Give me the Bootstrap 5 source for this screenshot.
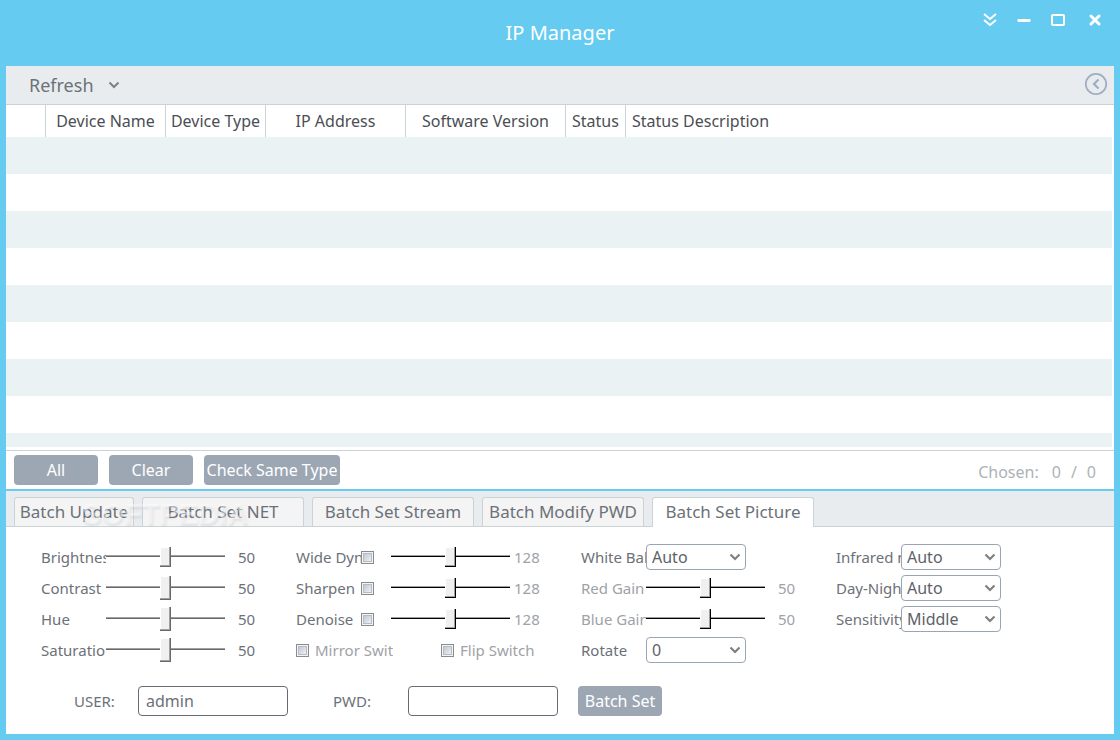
<!DOCTYPE html>
<html lang="en">
<head>
<meta charset="utf-8">
<meta name="viewport" content="width=device-width, initial-scale=1">
<title>IP Manager</title>
<link href="https://cdn.jsdelivr.net/npm/bootstrap@5.3.0/dist/css/bootstrap.min.css" rel="stylesheet">
<style>
  :root { --sky: #66cbf1; --bar: #e8ecef; --line: #cad3d5; --slate: #9da7b4; --ink: #6c7178; --muted: #9fa2a6; }
  body { font-family: "Noto Sans", "Open Sans", sans-serif; font-size: 15px; line-height: 20px; color: var(--ink); background: var(--sky); }
  .app-window { padding: 0 6px 6px; }
  .title-bar { display: grid; grid-template-columns: 1fr auto 1fr; height: 66px; color: #fff; }
  .title-bar h1 { font-size: 20px; line-height: 24px; font-weight: 400; }
  .win-btn { width: 34px; height: 40px; padding: 0; border: 0; background: none; color: #fff; display: grid; place-items: center; }
  .win-btn.close-win { width: 39px; }
  .tool-bar { background: var(--bar); border-bottom: 1px solid var(--line); height: 39px; padding: 0 6px 2px 23px; }
  .refresh-btn { font-size: 18px; line-height: 24px; color: var(--ink); gap: 14px; padding-top: 2px; }
  .plain-btn { border: 0; background: none; color: inherit; }
  .grid-area { flex: 1 1 0; min-height: 120px; margin-right: 2px; margin-bottom: 3px; }
  .device-table { table-layout: fixed; width: 100%; border-collapse: separate; border-spacing: 0; }
  .device-table th { height: 32px; padding: 0; font-size: 16px; font-weight: 400; color: #4b4e53; text-align: center; border-right: 1px solid var(--line); white-space: nowrap; }
  .device-table th:last-child { border: 0; text-align: left; padding-left: 6px; }
  .device-table td { height: 37px; padding: 0; }
  .device-table tbody tr:nth-child(odd) { background: #eaf2f4; }
  .action-bar { border-top: 1px solid var(--line); border-bottom: 2px solid var(--sky); height: 41px; padding: 0 18px 0 8px; gap: 11px; }
  .slate-btn { width: 84px; height: 30px; padding: 0; border: 0; border-radius: 4px; background: var(--slate); color: #fff; font-size: 16px; line-height: 30px; text-align: center; white-space: nowrap; }
  .slate-btn.wide { width: 136px; }
  .chosen { font-size: 16px; color: #adb2b7; padding-top: 4px; }
  .chosen .count-lbl { margin-right: 13px; }
  .chosen .gap-after { margin-right: 10px; }
  .tab-strip { background: var(--bar); border-bottom: 1px solid var(--line); height: 36px; padding: 0 8px; gap: 8px; }
  .tab-btn { width: 162px; height: 29px; padding: 0; border: 1px solid var(--line); border-bottom: 0; border-radius: 3px 3px 0 0; background: #f4f4f4; color: var(--ink); font-size: 17px; line-height: 28px; white-space: nowrap; }
  .tab-btn.first { width: 120px; }
  .tab-btn.active { height: 30px; margin-bottom: -1px; padding-bottom: 2px; background: #fff; }
  .watermark { left: 76px; top: 7px; font: 700 29px/32px "Liberation Sans", sans-serif; color: rgba(255,255,255,.45); text-shadow: 1px 2px 2px rgba(120,130,140,.15); pointer-events: none; }
  .settings { padding: 14px 35px 18px; }
  .set-row { height: 31px; display: flex; align-items: center; }
  .set-grid { display: grid; grid-template-columns: 255px 285px 255px 165px; }
  .lbl { width: 65px; overflow: hidden; white-space: nowrap; flex: none; }
  .off { color: var(--muted); }
  .val { margin-left: 13px; }
  .val.near { margin-left: 4px; }
  .tick { appearance: none; width: 13px; height: 13px; margin: 1px 0 0; flex: none; border: 1px solid #858c92; background: linear-gradient(135deg, #b9c3ce, #f4f6f8) content-box, #f4f4f4; padding: 1px; outline: 1px solid #b6bcc2; outline-offset: -3px; }
  .tick + .slide { margin-left: 17px; }
  .tick-lbl { width: 78px; margin-left: 6px; overflow: hidden; white-space: nowrap; }
  .tick-lbl + .tick { margin-left: 48px; }
  .tick-lbl.roomy { width: 85px; }
  .slide { appearance: none; width: 119px; height: 26px; margin: 0; background: none; flex: none; --dark: #696969; --thumb: 24px; --thumb-top: 1px; }
  .slide:disabled { --dark: #000; }
  .slide.short, .slide:disabled { --thumb: 20px; --thumb-top: 3px; }
  .slide::-webkit-slider-runnable-track { height: 26px; background: linear-gradient(#a0a0a0 1px, var(--dark) 1px) center 11px / 100% 2px no-repeat; }
  .slide::-webkit-slider-thumb { appearance: none; width: 11px; height: var(--thumb); margin-top: var(--thumb-top); background: #f0f0f0; border: 0; box-shadow: inset -1px -1px var(--dark), inset -2px -2px #a0a0a0, inset 1px 1px #fff; }
  .pick { width: 100px; height: 26px; padding: 0 5px; border: 1px solid #9aa5b3; border-radius: 4px; font-size: 16px; line-height: 24px; color: #5d6268; appearance: none; flex: none;
    background: #fff url("data:image/svg+xml,%3Csvg xmlns='http://www.w3.org/2000/svg' width='12' height='8'%3E%3Cpath d='M1.5 1.5 6 6l4.5-4.5' fill='none' stroke='%23808080' stroke-width='2.2'/%3E%3C/svg%3E") no-repeat right 4px center; }
  .login-row { margin-top: 21px; padding-left: 33px; }
  .login-row .user-lbl { width: 64px; }
  .login-row .pwd-lbl { width: 75px; margin-left: 45px; }
  .login-row .slate-btn { margin-left: 20px; }
  .entry { width: 150px; height: 30px; padding: 0 7px; border: 1px solid #656a73; border-radius: 4px; font-size: 16px; color: var(--ink); }
</style>
</head>
<body>
<div class="app-window d-flex flex-column min-vh-100">
  <header class="title-bar">
    <span></span>
    <h1 class="m-0 align-self-center">IP Manager</h1>
    <div class="d-flex justify-content-end align-self-start">
      <button class="win-btn" type="button" aria-label="Menu"><svg width="14" height="14" viewBox="0 0 14 14" fill="none" stroke="#fff" stroke-width="2"><path d="M1 1l6 5 6-5M1 7l6 5 6-5"/></svg></button>
      <button class="win-btn" type="button" aria-label="Minimize"><svg width="14" height="14" viewBox="0 0 14 14"><rect x="0.500" y="6" width="13" height="3" rx="1" fill="#fff"/></svg></button>
      <button class="win-btn" type="button" aria-label="Maximize"><svg width="14" height="12" viewBox="0 0 14 12"><rect x="1" y="1" width="12" height="10" rx="1" fill="none" stroke="#fff" stroke-width="2"/></svg></button>
      <button class="win-btn close-win" type="button" aria-label="Close"><svg width="12" height="12" viewBox="0 0 12 12"><path d="M2 2l8 8M10 2l-8 8" stroke="#fff" stroke-width="3" stroke-linecap="round"/></svg></button>
    </div>
  </header>

  <main class="d-flex flex-column flex-grow-1 bg-white">
    <div class="tool-bar d-flex align-items-center justify-content-between">
      <button class="plain-btn refresh-btn d-flex align-items-center px-0 pb-0" type="button">Refresh
        <svg width="12" height="8" viewBox="0 0 12 8"><path d="M1.500 1.500 6 6l4.500-4.500" fill="none" stroke="#808080" stroke-width="2"/></svg></button>
      <button class="plain-btn d-flex p-0" type="button" aria-label="Collapse"><svg width="24" height="24" viewBox="0 0 24 24" fill="none" stroke="#a0adc2"><circle cx="12" cy="12" r="10.200" stroke-width="1.800"/><path d="M14.500 7.500 10 12l4.500 4.500" stroke-width="2.200"/></svg></button>
    </div>

    <div class="grid-area overflow-hidden">
      <table class="device-table">
        <colgroup><col style="width:40px"><col style="width:120px"><col style="width:100px"><col style="width:140px"><col style="width:160px"><col style="width:60px"><col></colgroup>
        <thead><tr><th></th><th>Device Name</th><th>Device Type</th><th>IP Address</th><th>Software Version</th><th>Status</th><th>Status Description</th></tr></thead>
        <tbody>
          <tr><td colspan="7"></td></tr><tr><td colspan="7"></td></tr><tr><td colspan="7"></td></tr>
          <tr><td colspan="7"></td></tr><tr><td colspan="7"></td></tr><tr><td colspan="7"></td></tr>
          <tr><td colspan="7"></td></tr><tr><td colspan="7"></td></tr><tr><td colspan="7"></td></tr>
        </tbody>
      </table>
    </div>

    <div class="action-bar d-flex align-items-center">
      <button class="slate-btn" type="button">All</button>
      <button class="slate-btn" type="button">Clear</button>
      <button class="slate-btn wide" type="button">Check Same Type</button>
      <div class="chosen ms-auto d-flex"><span class="count-lbl">Chosen:</span><span class="gap-after">0</span><span class="gap-after">/</span><span>0</span></div>
    </div>

    <div class="tab-strip d-flex align-items-end position-relative" role="tablist">
      <button class="tab-btn first" type="button" role="tab">Batch Update</button>
      <button class="tab-btn" type="button" role="tab">Batch Set NET</button>
      <button class="tab-btn" type="button" role="tab">Batch Set Stream</button>
      <button class="tab-btn" type="button" role="tab">Batch Modify PWD</button>
      <button class="tab-btn active" type="button" role="tab" aria-selected="true">Batch Set Picture</button>
      <div class="watermark position-absolute">SOFTPEDIA</div>
    </div>

    <form class="settings">
      <div class="set-grid">
        <div>
          <div class="set-row"><label class="lbl" for="bri">Brightness</label><input class="slide short" type="range" id="bri" value="50"><span class="val">50</span></div>
          <div class="set-row"><label class="lbl" for="con">Contrast</label><input class="slide" type="range" id="con" value="50"><span class="val">50</span></div>
          <div class="set-row"><label class="lbl" for="hue">Hue</label><input class="slide" type="range" id="hue" value="50"><span class="val">50</span></div>
          <div class="set-row"><label class="lbl" for="sat">Saturation</label><input class="slide" type="range" id="sat" value="50"><span class="val">50</span></div>
        </div>
        <div>
          <div class="set-row"><label class="lbl" for="wdr">Wide Dynamic</label><input class="tick" type="checkbox" id="wdr"><input class="slide" type="range" aria-label="Wide Dynamic level" max="255" value="128" disabled><span class="val near off">128</span></div>
          <div class="set-row"><label class="lbl" for="shp">Sharpen</label><input class="tick" type="checkbox" id="shp"><input class="slide" type="range" aria-label="Sharpen level" max="255" value="128" disabled><span class="val near off">128</span></div>
          <div class="set-row"><label class="lbl" for="den">Denoise</label><input class="tick" type="checkbox" id="den"><input class="slide" type="range" aria-label="Denoise level" max="255" value="128" disabled><span class="val near off">128</span></div>
          <div class="set-row off"><input class="tick" type="checkbox" id="mir" disabled><label class="tick-lbl" for="mir">Mirror Switch</label><input class="tick" type="checkbox" id="flp" disabled><label class="tick-lbl roomy" for="flp">Flip Switch</label></div>
        </div>
        <div>
          <div class="set-row"><label class="lbl" for="wb">White Balance</label><select class="pick" id="wb"><option>Auto</option></select></div>
          <div class="set-row off"><label class="lbl" for="red">Red Gain</label><input class="slide" type="range" id="red" value="50" disabled><span class="val">50</span></div>
          <div class="set-row off"><label class="lbl" for="blu">Blue Gain</label><input class="slide" type="range" id="blu" value="50" disabled><span class="val">50</span></div>
          <div class="set-row"><label class="lbl" for="rot">Rotate</label><select class="pick" id="rot"><option>0</option></select></div>
        </div>
        <div>
          <div class="set-row"><label class="lbl" for="ir">Infrared mode</label><select class="pick" id="ir"><option>Auto</option></select></div>
          <div class="set-row"><label class="lbl" for="dn">Day-Night</label><select class="pick" id="dn"><option>Auto</option></select></div>
          <div class="set-row"><label class="lbl" for="sen">Sensitivity</label><select class="pick" id="sen"><option>Middle</option></select></div>
        </div>
      </div>
      <div class="login-row d-flex align-items-center">
        <label class="user-lbl" for="user">USER:</label><input class="entry" id="user" type="text" value="admin">
        <label class="pwd-lbl" for="pwd">PWD:</label><input class="entry" id="pwd" type="password">
        <button class="slate-btn" type="button">Batch Set</button>
      </div>
    </form>
  </main>
</div>
<script src="https://cdn.jsdelivr.net/npm/bootstrap@5.3.0/dist/js/bootstrap.bundle.min.js"></script>
</body>
</html>
